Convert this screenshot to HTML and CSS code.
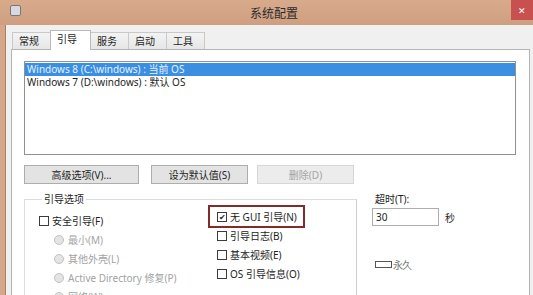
FILE: index.html
```html
<!DOCTYPE html>
<html>
    <head>
        <title>系统配置</title>
        <link rel="stylesheet" href="styles.css">
    </head>
    <body>
        <div class="window">

            <div class="titlebar">
                <span class="appIcon"></span>
                <span class="title">系统配置</span>
                <span class="closeBtn">&#x2715;</span>
            </div>

            <div class="client">

                <div class="tabs">
                    <div class="tab">常规</div>
                    <div class="tab active">引导</div>
                    <div class="tab">服务</div>
                    <div class="tab">启动</div>
                    <div class="tab">工具</div>
                </div>

                <div class="panel">

                    <div class="osList">
                        <div class="osRow selected">Windows 8 (C:\windows) : 当前 OS</div>
                        <div class="osRow">Windows 7 (D:\windows) : 默认 OS</div>
                    </div>

                    <div class="buttonRow">
                        <button class="btn wide">高级选项(V)...</button>
                        <button class="btn">设为默认值(S)</button>
                        <button class="btn" disabled>删除(D)</button>
                    </div>

                    <div class="lower">

                        <fieldset class="group">
                            <legend>引导选项</legend>
                            <div class="cols">
                                <div class="col left">
                                    <div class="opt"><span class="box"></span>安全引导(F)</div>
                                    <div class="opt sub off"><span class="radio"></span>最小(M)</div>
                                    <div class="opt sub off"><span class="radio"></span>其他外壳(L)</div>
                                    <div class="opt sub off"><span class="radio"></span>Active Directory 修复(P)</div>
                                    <div class="opt sub off"><span class="radio"></span>网络(W)</div>
                                </div>
                                <div class="col">
                                    <div class="opt marked"><span class="box checked">&#x2714;</span>无 GUI 引导(N)</div>
                                    <div class="opt"><span class="box"></span>引导日志(B)</div>
                                    <div class="opt"><span class="box"></span>基本视频(E)</div>
                                    <div class="opt"><span class="box"></span>OS 引导信息(O)</div>
                                </div>
                            </div>
                        </fieldset>

                        <div class="timeout">
                            <div class="label">超时(T):</div>
                            <div class="timeRow">
                                <div class="field">30</div>
                                <span class="unit">秒</span>
                            </div>
                            <div class="permanent"><span class="box flat"></span><span class="faint">永久</span></div>
                        </div>

                    </div>

                </div>
            </div>
        </div>
    </body>
</html>
```

FILE: styles.css
```css
body {
    margin: 0;
    font-family: "Noto Sans", "Noto Sans CJK SC", sans-serif;
    font-size: 10px;
    color: #1e1e1e;
    background: #f0f0f0;
}

.window {
    width: 533px;
    height: 295px;
    overflow: hidden;
    background: #d6a688;
    display: flex;
    flex-direction: column;
}

/* Title bar */
.titlebar {
    height: 25px;
    flex: none;
    display: flex;
    align-items: center;
    background: linear-gradient(#d8aa8c, #cf9e80);
}

.appIcon {
    width: 9px;
    height: 9px;
    margin-left: 10px;
    margin-top: -4px;
    background: #d8d8e0;
    border: 1px solid #777;
    border-radius: 2px;
}

.title {
    flex: 1;
    text-align: center;
    font-size: 12px;
    color: #2b2b2b;
    padding-left: 16px;
}

.closeBtn {
    width: 22px;
    height: 20px;
    align-self: flex-start;
    background: #c8504e;
    color: #fff;
    font-size: 9px;
    display: flex;
    align-items: center;
    justify-content: center;
}

/* Client area */
.client {
    flex: 1;
    margin-left: 5px;
    border-left: 1px solid #a88068;
    background: #f0f0f0;
    padding-top: 7px;
}

.tabs {
    display: flex;
    padding-left: 6px;
    height: 17px;
    align-items: flex-end;
}

.tab {
    height: 16px;
    line-height: 16px;
    padding: 0 6px;
    width: 25px;
    border: 1px solid #c9c9c9;
    border-bottom: none;
    margin-right: -1px;
    background: linear-gradient(#f3f3f3, #e6e6e6);
}

.tab.active {
    height: 19px;
    line-height: 17px;
    width: 27px;
    background: #fff;
    border-color: #b9b9b9;
    position: relative;
    z-index: 1;
    margin-bottom: -1px;
}

.panel {
    margin-left: 5px;
    margin-right: 3px;
    height: 240px;
    background: #fff;
    border: 1px solid #b4b4b4;
    padding: 11px 12px 0 12px;
}

/* OS list */
.osList {
    width: 490px;
    height: 91px;
    border: 1px solid #8f9196;
    padding-top: 1px;
}

.osRow {
    height: 13px;
    line-height: 13px;
    padding-left: 2px;
}

.osRow.selected {
    background: #3a8fe2;
    color: #e6f1ff;
}

.buttonRow {
    display: flex;
    margin-top: 10px;
}

.btn {
    font: inherit;
    color: #1e1e1e;
    width: 97px;
    height: 19px;
    margin-right: 12px;
    padding: 0;
    background: #e3e3e3;
    border: 1px solid #adadad;
}

.btn.wide {
    width: 115px;
}

.btn:disabled {
    margin-left: -3px;
    background: #ececec;
    border-color: #d6d6d6;
    color: #a3a3a3;
}

/* Boot options */
.lower {
    display: flex;
    margin-top: 9px;
}

.group {
    width: 317px;
    margin: 0;
    padding: 2px 0 0 14px;
    border: 1px solid #dcdcdc;
    border-right-color: #d0d0d0;
    height: 110px;
}

.group legend {
    padding: 0 2px;
    margin-left: 3px;
    line-height: 12px;
}

.cols {
    display: flex;
}

.col {
    display: flex;
    flex-direction: column;
}

.col.left {
    width: 178px;
    padding-top: 4px;
}

.opt {
    height: 19px;
    display: flex;
    align-items: center;
    white-space: nowrap;
}

.opt.sub {
    padding-left: 15px;
}

.opt.off {
    color: #a3a3a3;
}

.opt.marked {
    align-self: flex-start;
    outline: 2px solid #832b2b;
    outline-offset: 1px;
    padding-right: 5px;
    margin-left: -6px;
    padding-left: 6px;
    margin-top: 1px;
    margin-bottom: 1px;
    height: 17px;
}

.box {
    width: 8px;
    height: 8px;
    border: 1px solid #3c3c3c;
    margin-right: 3px;
    flex: none;
    font-size: 8px;
    line-height: 8px;
    text-align: center;
    color: #222;
}

.radio {
    width: 8px;
    height: 8px;
    border-radius: 50%;
    border: 1px solid #c2c2c2;
    background: #e4e4e4;
    margin-right: 4px;
    flex: none;
}

/* Timeout */
.timeout {
    margin-left: 15px;
}

.timeout .label {
    line-height: 12px;
    padding-left: 3px;
}

.timeRow {
    display: flex;
    align-items: center;
    margin-top: 3px;
}

.field {
    width: 62px;
    height: 16px;
    line-height: 16px;
    padding-left: 3px;
    border: 1px solid #adadad;
}

.unit {
    margin-left: 6px;
}

.permanent {
    display: flex;
    align-items: center;
    margin-top: 31px;
    margin-left: 3px;
}

.box.flat {
    width: 15px;
    height: 5px;
    border-color: #555;
    margin-right: 1px;
}

.faint {
    color: #777;
    letter-spacing: -1px;
}
```
